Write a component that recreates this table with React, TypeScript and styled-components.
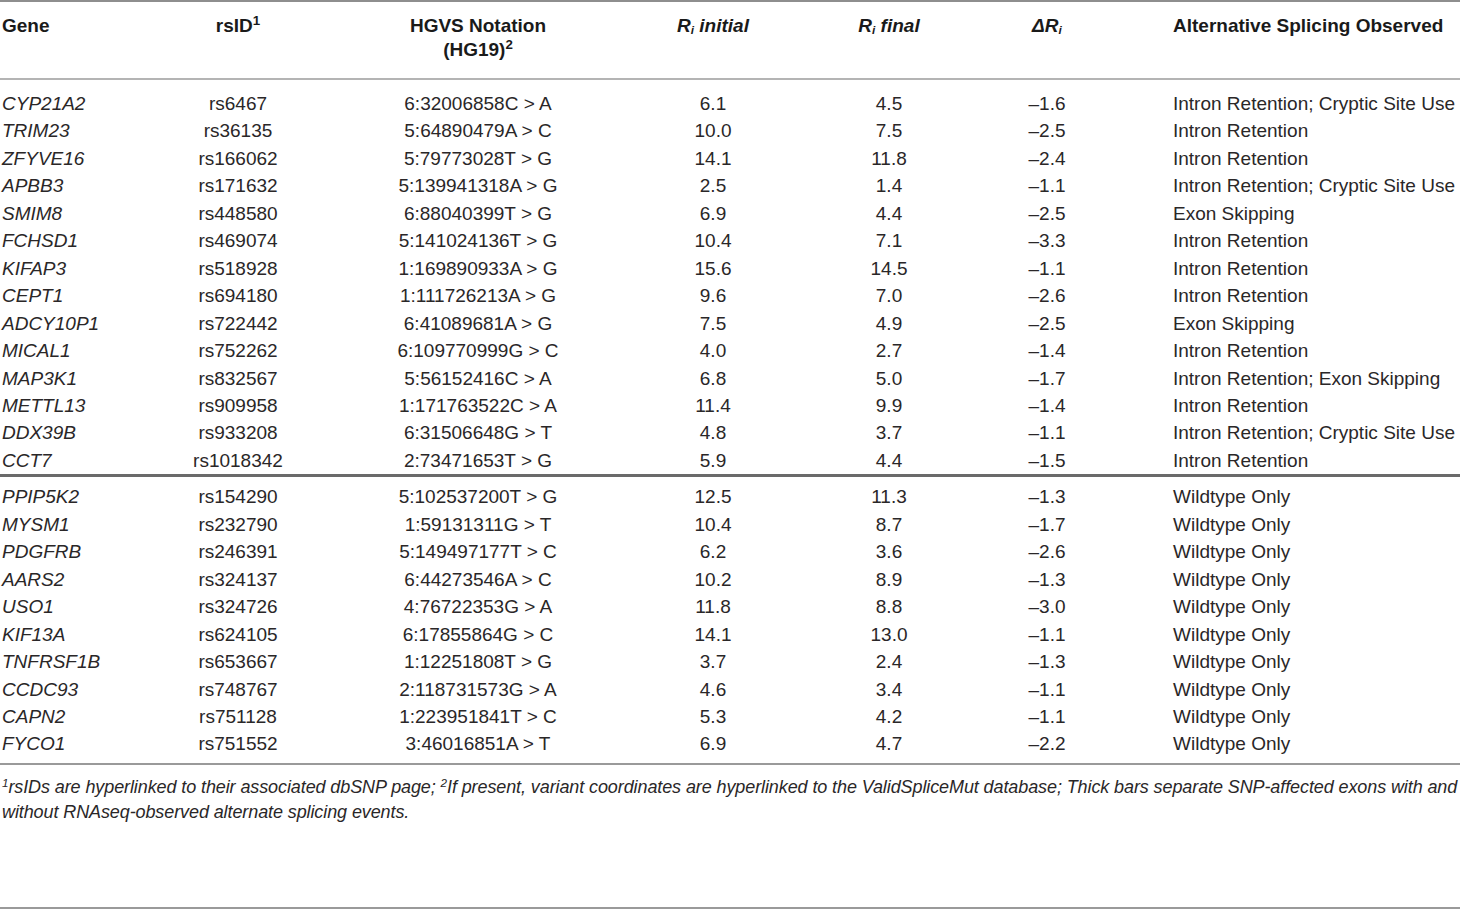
import React from 'react'
import styled, { createGlobalStyle } from 'styled-components'

const GlobalStyle = createGlobalStyle`
	html, body {
		margin: 0;
		padding: 0;
		background: #fff;
	}
	body {
		font-family: "Liberation Sans", Arial, sans-serif;
		color: #231f20;
	}
`

type Row = [string, string, string, string, string, string, string]

const spliced: Row[] = [
	['CYP21A2', 'rs6467', '6:32006858C > A', '6.1', '4.5', '–1.6', 'Intron Retention; Cryptic Site Use'],
	['TRIM23', 'rs36135', '5:64890479A > C', '10.0', '7.5', '–2.5', 'Intron Retention'],
	['ZFYVE16', 'rs166062', '5:79773028T > G', '14.1', '11.8', '–2.4', 'Intron Retention'],
	['APBB3', 'rs171632', '5:139941318A > G', '2.5', '1.4', '–1.1', 'Intron Retention; Cryptic Site Use'],
	['SMIM8', 'rs448580', '6:88040399T > G', '6.9', '4.4', '–2.5', 'Exon Skipping'],
	['FCHSD1', 'rs469074', '5:141024136T > G', '10.4', '7.1', '–3.3', 'Intron Retention'],
	['KIFAP3', 'rs518928', '1:169890933A > G', '15.6', '14.5', '–1.1', 'Intron Retention'],
	['CEPT1', 'rs694180', '1:111726213A > G', '9.6', '7.0', '–2.6', 'Intron Retention'],
	['ADCY10P1', 'rs722442', '6:41089681A > G', '7.5', '4.9', '–2.5', 'Exon Skipping'],
	['MICAL1', 'rs752262', '6:109770999G > C', '4.0', '2.7', '–1.4', 'Intron Retention'],
	['MAP3K1', 'rs832567', '5:56152416C > A', '6.8', '5.0', '–1.7', 'Intron Retention; Exon Skipping'],
	['METTL13', 'rs909958', '1:171763522C > A', '11.4', '9.9', '–1.4', 'Intron Retention'],
	['DDX39B', 'rs933208', '6:31506648G > T', '4.8', '3.7', '–1.1', 'Intron Retention; Cryptic Site Use'],
	['CCT7', 'rs1018342', '2:73471653T > G', '5.9', '4.4', '–1.5', 'Intron Retention'],
]

const wildtype: Row[] = [
	['PPIP5K2', 'rs154290', '5:102537200T > G', '12.5', '11.3', '–1.3', 'Wildtype Only'],
	['MYSM1', 'rs232790', '1:59131311G > T', '10.4', '8.7', '–1.7', 'Wildtype Only'],
	['PDGFRB', 'rs246391', '5:149497177T > C', '6.2', '3.6', '–2.6', 'Wildtype Only'],
	['AARS2', 'rs324137', '6:44273546A > C', '10.2', '8.9', '–1.3', 'Wildtype Only'],
	['USO1', 'rs324726', '4:76722353G > A', '11.8', '8.8', '–3.0', 'Wildtype Only'],
	['KIF13A', 'rs624105', '6:17855864G > C', '14.1', '13.0', '–1.1', 'Wildtype Only'],
	['TNFRSF1B', 'rs653667', '1:12251808T > G', '3.7', '2.4', '–1.3', 'Wildtype Only'],
	['CCDC93', 'rs748767', '2:118731573G > A', '4.6', '3.4', '–1.1', 'Wildtype Only'],
	['CAPN2', 'rs751128', '1:223951841T > C', '5.3', '4.2', '–1.1', 'Wildtype Only'],
	['FYCO1', 'rs751552', '3:46016851A > T', '6.9', '4.7', '–2.2', 'Wildtype Only'],
]

const widths = [160, 156, 324, 146, 206, 110, 358]
const aligns: Array<'left' | 'center'> = ['left', 'center', 'center', 'center', 'center', 'center', 'left']

const App = () => {
	const renderGroup = (rows: Row[], first: 'top' | 'thick', closing: boolean) =>
		rows.map((r, i) => (
			<BodyRow key={r[0]} $lead={i === 0 ? first : undefined} $last={closing && i === rows.length - 1}>
				{r.map((v, c) => (
					<Cell key={c} $align={aligns[c]} $italic={c === 0} $last={c === 6}>{v}</Cell>
				))}
			</BodyRow>
		))

	return (
		<>
			<GlobalStyle />
			<Page>
				<Table>
					<colgroup>
						{widths.map((w, i) => <Col key={i} $w={w} />)}
					</colgroup>
					<thead>
						<tr>
							<Head $align="left">Gene</Head>
							<Head $align="center">rsID<Sup>1</Sup></Head>
							<Head $align="center">HGVS Notation<br />(HG19)<Sup>2</Sup></Head>
							<Head $align="center"><em>R<Sub>i</Sub> initial</em></Head>
							<Head $align="center"><em>R<Sub>i</Sub> final</em></Head>
							<Head $align="center"><em>ΔR<Sub>i</Sub></em></Head>
							<Head $align="left" $last>Alternative Splicing Observed</Head>
						</tr>
					</thead>
					<Group>{renderGroup(spliced, 'top', false)}</Group>
					<Group $thick>{renderGroup(wildtype, 'thick', true)}</Group>
				</Table>
				<Footnote>
					<Sup>1</Sup>rsIDs are hyperlinked to their associated dbSNP page; <Sup>2</Sup>If present, variant coordinates are hyperlinked to the ValidSpliceMut database; Thick bars separate SNP-affected exons with and<br />
					without RNAseq-observed alternate splicing events.
				</Footnote>
				<BottomRule />
			</Page>
		</>
	)
}

export default App

const Page = styled.div`
	width: 1460px;
	height: 910px;
	display: flex;
	flex-direction: column;
	box-sizing: border-box;
`

const Table = styled.table`
	width: 1460px;
	table-layout: fixed;
	border-collapse: collapse;
	border-top: 2px solid #8e8e8e;
	border-bottom: 2px solid #9a9a9a;
	font-size: 19px;
`

const Col = styled.col<{ $w: number }>`
	width: ${p => p.$w}px;
`

const Head = styled.th<{ $align: 'left' | 'center'; $last?: boolean }>`
	text-align: ${p => p.$align};
	vertical-align: top;
	font-weight: 700;
	line-height: 24px;
	padding: 12px 0 16px ${p => (p.$align === 'left' ? (p.$last ? '71px' : '2px') : '0')};
	border-bottom: 2px solid #b4b4b4;
	color: #1a1a1a;

	em {
		font-style: italic;
	}
`

const Sup = styled.sup`
	font-size: 0.7em;
	vertical-align: 0.5em;
	line-height: 0;
`

const Sub = styled.sub`
	font-size: 0.62em;
	vertical-align: -0.2em;
	line-height: 0;
`

const Group = styled.tbody<{ $thick?: boolean }>`
	border-top: ${p => (p.$thick ? '3px solid #6a6a6a' : 'none')};
`

const BodyRow = styled.tr<{ $lead?: 'top' | 'thick'; $last?: boolean }>`
	td {
		padding-top: ${p => (p.$lead === 'top' ? '10px' : p.$lead === 'thick' ? '6px' : '0')};
		padding-bottom: ${p => (p.$last ? '5px' : '0')};
	}
`

const Cell = styled.td<{ $align: 'left' | 'center'; $italic?: boolean; $last?: boolean }>`
	text-align: ${p => p.$align};
	font-style: ${p => (p.$italic ? 'italic' : 'normal')};
	line-height: 27.45px;
	white-space: nowrap;
	padding-left: ${p => (p.$last ? '71px' : p.$align === 'left' ? '2px' : '0')};
	padding-right: 0;
	color: #2a2728;
`

const Footnote = styled.p`
	margin: 10px 0 0;
	padding-left: 2px;
	font-size: 18px;
	font-style: italic;
	line-height: 25.5px;
	color: #2a2728;
	white-space: nowrap;
	letter-spacing: -0.1px;

	sup {
		font-size: 0.65em;
	}
`

const BottomRule = styled.div`
	margin-top: auto;
	height: 2px;
	margin-bottom: 1px;
	background: #9a9a9a;
`
